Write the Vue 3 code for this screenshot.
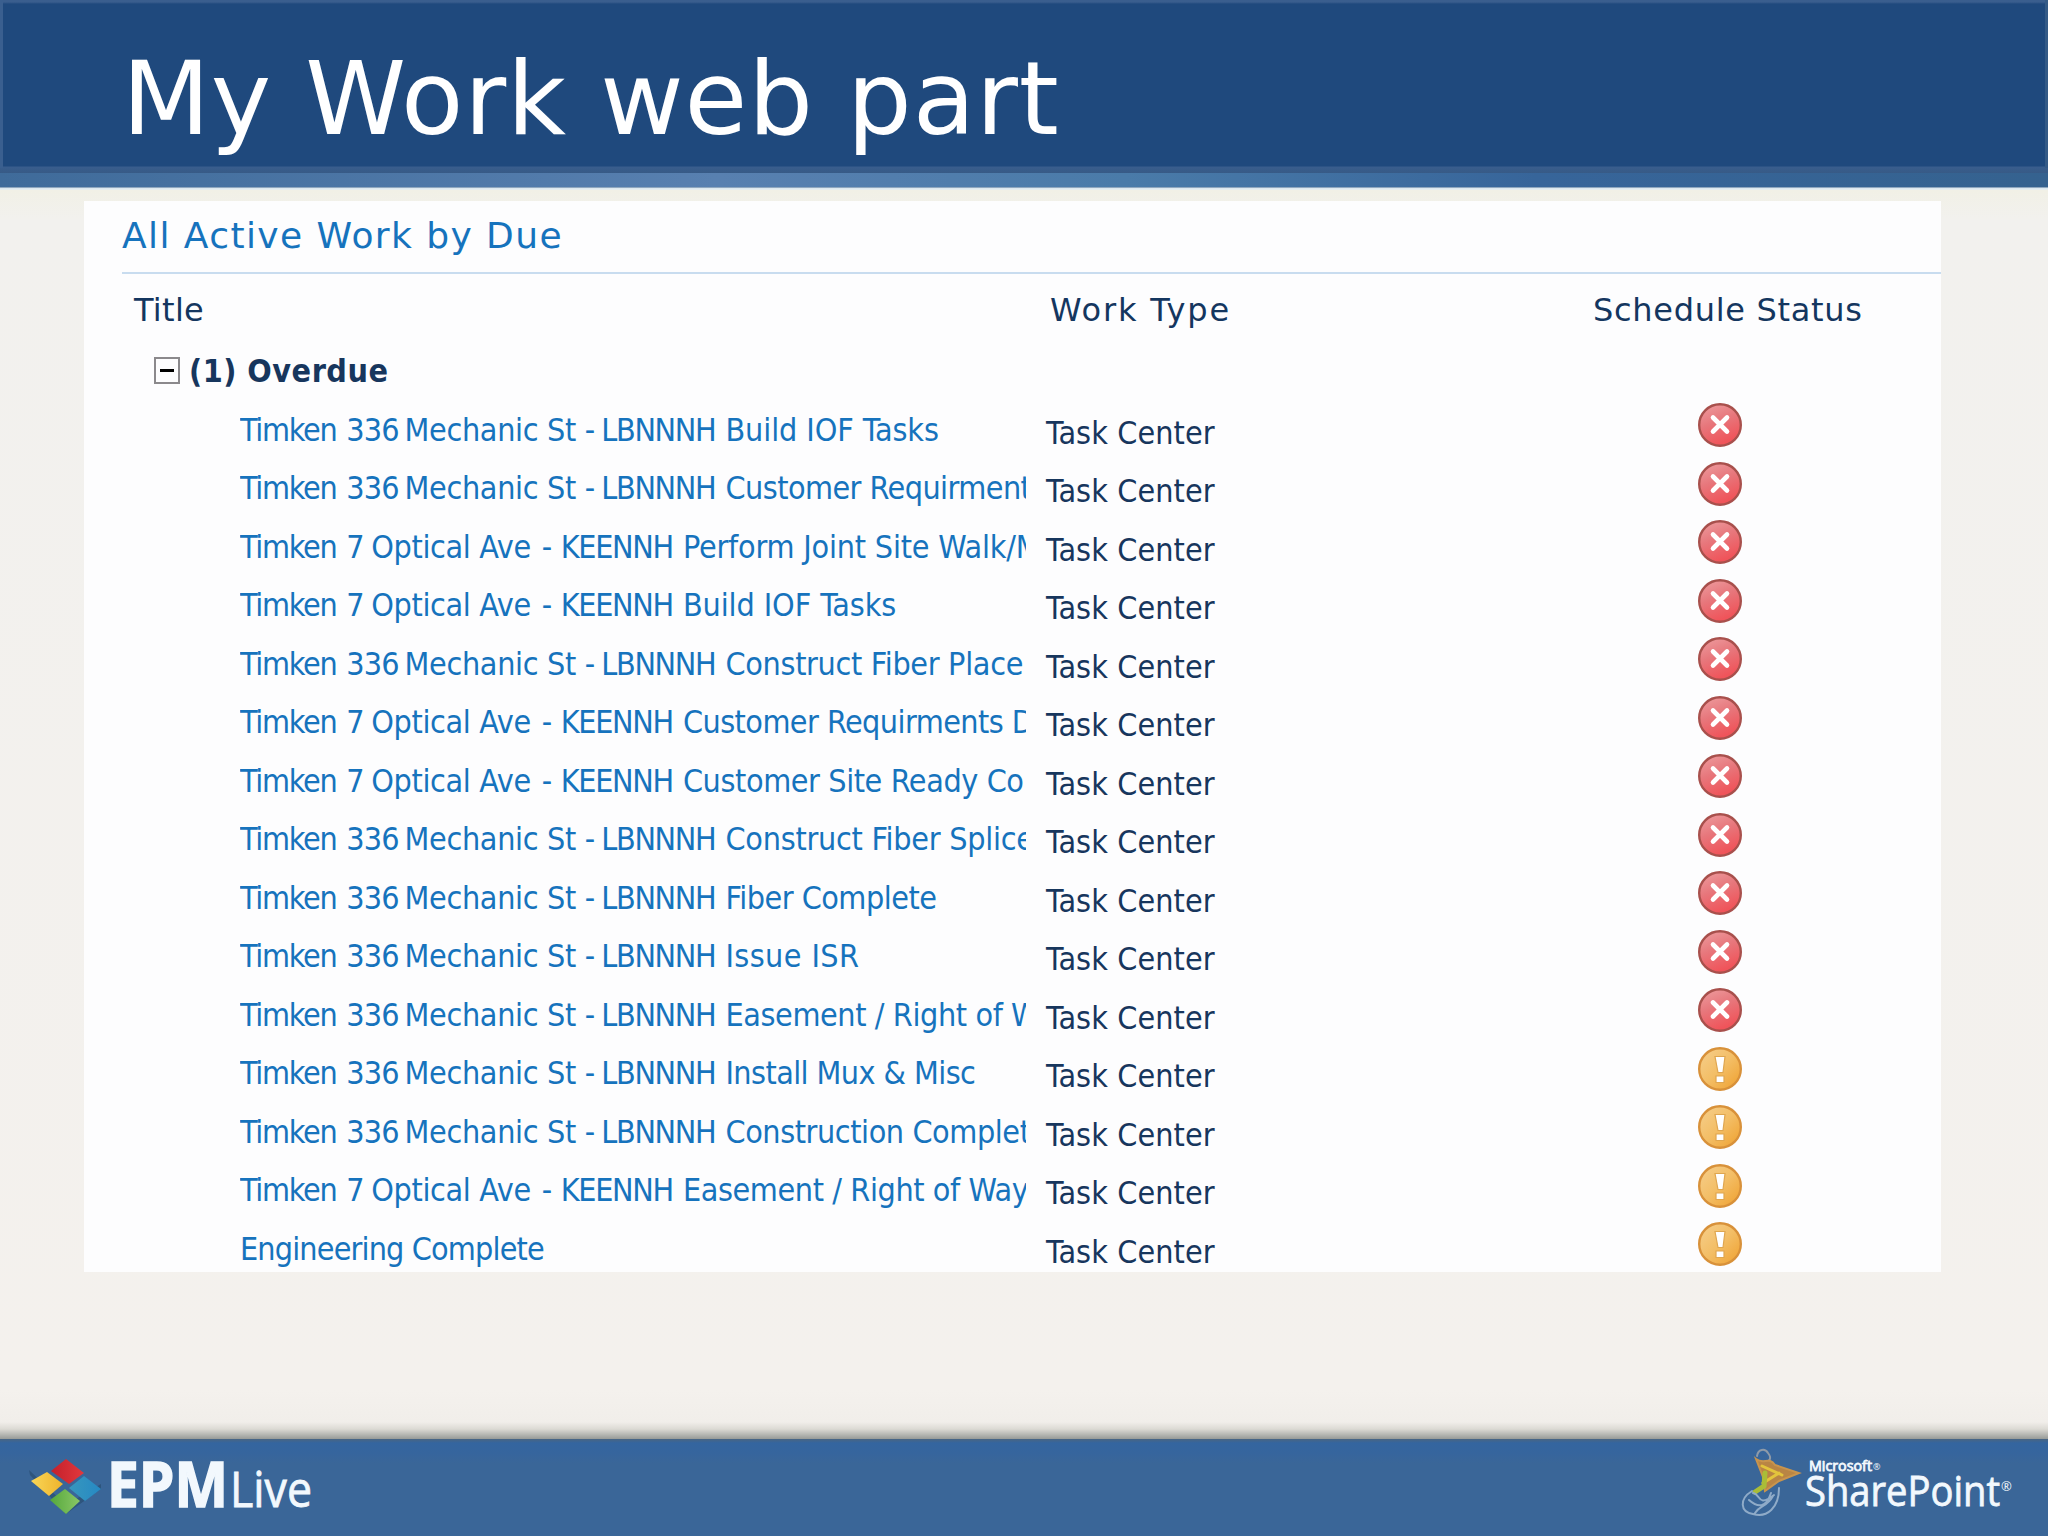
<script setup>
    const columns = [
        { label: 'Title', tracking: 0.3 },
        { label: 'Work Type', tracking: 1.8 },
        { label: 'Schedule Status', tracking: 0.7 }
    ]

    const mechanic = { number: '336', street: 'Mechanic St', code: 'LBNNNH' }
    const optical = { number: '7', street: 'Optical Ave', code: 'KEENNH' }

    const tasks = [
        { site: mechanic, work: 'Build IOF Tasks', tracking: -0.1, late: true },
        { site: mechanic, work: 'Customer Requirments', tracking: -0.55, late: true },
        { site: optical, work: 'Perform Joint Site Walk/M', tracking: -0.2, late: true },
        { site: optical, work: 'Build IOF Tasks', tracking: -0.1, late: true },
        { site: mechanic, work: 'Construct Fiber Place', tracking: -0.32, late: true },
        { site: optical, work: 'Customer Requirments D', tracking: -0.55, late: true },
        { site: optical, work: 'Customer Site Ready Co', tracking: -0.4, late: true },
        { site: mechanic, work: 'Construct Fiber Splice', tracking: -0.25, late: true },
        { site: mechanic, work: 'Fiber Complete', tracking: -0.5, late: true },
        { site: mechanic, work: 'Issue ISR', tracking: 0.4, late: true },
        { site: mechanic, work: 'Easement / Right of W', tracking: -0.4, late: true },
        { site: mechanic, work: 'Install Mux & Misc', tracking: -0.58, late: false },
        { site: mechanic, work: 'Construction Complete', tracking: -0.42, late: false },
        { site: optical, work: 'Easement / Right of Way', tracking: -0.4, late: false },
        { site: null, work: 'Engineering Complete', tracking: -0.84, late: false }
    ]
</script>

<template>
    <div class="slide">
        <header class="header">
            <h1>My Work web part</h1>
        </header>

        <main class="content">
            <section class="panel">
                <h2>All Active Work by Due</h2>
                <div class="grid-row head">
                    <span
                        v-for="col in columns"
                        :key="col.label"
                        :style="{ letterSpacing: col.tracking + 'px' }"
                    >{{ col.label }}</span>
                </div>
                <div class="group">
                    <i class="toggle"></i>
                    <b>(1) Overdue</b>
                </div>
                <div class="grid-row task" v-for="(task, i) in tasks" :key="i">
                    <a class="title" :class="{ optical: task.site === optical }">
                        <template v-if="task.site">
                            <span class="name">Timken</span>
                            <span class="number">{{ task.site.number }}</span>
                            <span class="street">{{ task.site.street }}</span>
                            <span class="dash">-</span>
                            <span class="code">{{ task.site.code }}</span>
                        </template>
                        <span :style="{ letterSpacing: task.tracking + 'px' }">{{ task.work }}</span>
                    </a>
                    <span class="type">Task Center</span>
                    <svg class="status" viewBox="0 0 44 44">
                        <template v-if="task.late">
                            <circle cx="22" cy="22" r="20.8" fill="url(#red)" stroke="#a8504c" stroke-width="2.4" />
                            <path d="M15 14.5L29 28.5M29 14.5L15 28.5" stroke="#fff" stroke-width="4.6" stroke-linecap="round" />
                        </template>
                        <template v-else>
                            <circle cx="22" cy="22" r="20.8" fill="url(#amber)" stroke="#d8913a" stroke-width="2.4" />
                            <path d="M17 9.500h10l-2 16h-5zM18 29h8v6.500h-8z" fill="#fff" stroke="#dfa650" stroke-width="1.2" />
                        </template>
                    </svg>
                </div>
            </section>
        </main>

        <footer class="footer">
            <svg class="epm" width="320" height="97" viewBox="0 0 320 97">
                <path d="M29 31L66 66l35-21v5L66 75 30 36z" fill="#27496b" opacity=".6" />
                <path d="M66 20L84 34 69 45 51 32z" fill="url(#tile-red)" />
                <path d="M47 33L63 45 49 57 31 42z" fill="url(#tile-yellow)" />
                <path d="M84 37L101 50 85 62 69 49z" fill="url(#tile-blue)" />
                <path d="M65 50L80 62 66 75 50 61z" fill="url(#tile-green)" />
                <g class="logo-text">
                    <text class="heavy" x="107" y="68" font-size="62" font-weight="700" textLength="121" lengthAdjust="spacingAndGlyphs">EPM</text>
                    <text class="medium" x="230" y="68" font-size="50" textLength="82" lengthAdjust="spacingAndGlyphs">Live</text>
                </g>
            </svg>
            <svg class="sharepoint" width="308" height="97" viewBox="1740 0 308 97">
                <g fill="none" stroke-linecap="round">
                    <path d="M1757 17c1-7 8-8 11-3 4 5 2 8-3 10" stroke="#8e9aa8" stroke-width="2" />
                    <path d="M1756 20c8 6 13-3 19 6l24 8-20 8-14 10-2-14z" fill="#b98544" stroke="#c9944c" stroke-width="2" />
                    <path d="M1762 27l20 9M1763 44l16-10" stroke="#e3c43c" stroke-width="3" />
                    <path d="M1765 34l-1 13-9 6" stroke="#a9bd38" stroke-width="5" />
                    <path d="M1752 52c-13 8-12 21 1 23 14 4 26-6 26-26M1753 54c8 1 4 15 21 2M1749 61c9 8 17 8 22-7M1755 74c5-8 12-6 18-17" stroke="#8fabc8" stroke-width="2" />
                </g>
                <g class="logo-text">
                    <text class="medium" x="1809" y="32" font-size="14" textLength="63" lengthAdjust="spacingAndGlyphs">Microsoft</text>
                    <text x="1873" y="31" font-size="9">®</text>
                    <text class="medium" x="1805" y="67" font-size="42" textLength="195" lengthAdjust="spacingAndGlyphs">SharePoint</text>
                    <text x="2001" y="52" font-size="13">®</text>
                </g>
            </svg>
        </footer>

        <svg class="defs" width="0" height="0">
            <linearGradient id="red" x1="0" y1="0" x2=".4" y2="1">
                <stop offset="0" stop-color="#ee9fa1" />
                <stop offset=".5" stop-color="#e7777c" />
                <stop offset="1" stop-color="#f0545a" />
            </linearGradient>
            <linearGradient id="amber" x1="0" y1="0" x2="1" y2="1">
                <stop offset="0" stop-color="#f6cf8d" />
                <stop offset=".5" stop-color="#f3be66" />
                <stop offset="1" stop-color="#ef9f2c" />
            </linearGradient>
            <linearGradient id="tile-red">
                <stop offset="0" stop-color="#c4202c" />
                <stop offset="1" stop-color="#e2383c" />
            </linearGradient>
            <linearGradient id="tile-yellow">
                <stop offset="0" stop-color="#f9d657" />
                <stop offset="1" stop-color="#eeb32c" />
            </linearGradient>
            <linearGradient id="tile-blue">
                <stop offset="0" stop-color="#3797bd" />
                <stop offset="1" stop-color="#2689c4" />
            </linearGradient>
            <linearGradient id="tile-green">
                <stop offset="0" stop-color="#55a83c" />
                <stop offset="1" stop-color="#8ac766" />
            </linearGradient>
        </svg>
    </div>
</template>

<style>
    body {
        margin: 0;
    }
</style>

<style scoped>
    .slide {
        display: flex;
        flex-direction: column;
        width: 2048px;
        height: 1536px;
        overflow: hidden;
        background: #f4f1ed;
        font-family: "DejaVu Sans", Verdana, sans-serif;
    }

    .header {
        box-sizing: border-box;
        height: 190px;
        padding: 39px 0 0 122px;
        background:
            linear-gradient(90deg, #3a5f8f 3px, transparent 3px, transparent 2045px, #345a86 2045px) 0 0 / 100% 168px no-repeat,
            linear-gradient(90deg, #3f6b9a, #5880b0 35%, #4a7ba9 55%, #37659a 75%, #35628f) 0 173px / 100% 14px no-repeat,
            linear-gradient(#3a5e8e 2px, #1f497d 4px, #1f497d 166px, #395d8d 167px, #375a86 173px, #47698f 187px, #d8e6ef 188px, #eaf0f0);
    }

    h1 {
        margin: 0;
        color: #fff;
        font-size: 102px;
        font-weight: 400;
        line-height: 120px;
        letter-spacing: 0.85px;
        white-space: nowrap;
    }

    .content {
        flex: 1;
        padding: 11px 0 0 84px;
        background: linear-gradient(#f1f0e6, #f2f1ee 30px, #f4f1ed 1200px, #f1eeea 1232px, #dcdad4 1239px, #979b98 1249px);
    }

    .panel {
        width: 1857px;
        height: 1071px;
        overflow: hidden;
        background: #fdfdfe;
    }

    h2 {
        height: 71px;
        margin: 0 0 0 38px;
        border-bottom: 2px solid #c8dcef;
        color: #1673bd;
        font-size: 36px;
        font-weight: 400;
        line-height: 69px;
        letter-spacing: 1.42px;
    }

    .grid-row {
        display: grid;
        grid-template-columns: 942px 510px 1fr;
    }

    .head {
        height: 67.7px;
        color: #14365f;
        font-size: 32px;
        line-height: 72px;
    }

    .head span:nth-child(1) {
        padding-left: 50px;
    }

    .head span:nth-child(2) {
        padding-left: 24px;
    }

    .head span:nth-child(3) {
        padding-left: 57px;
    }

    .group {
        display: flex;
        align-items: center;
        height: 58.5px;
        padding-left: 70px;
        color: #17365d;
        font-family: "DejaVu Sans Condensed", "DejaVu Sans", sans-serif;
        font-stretch: condensed;
        font-size: 32px;
        letter-spacing: 0.5px;
    }

    .toggle {
        box-sizing: border-box;
        width: 26px;
        height: 27px;
        margin: -1px 9px 0 0;
        border: 2px solid #8b898c;
        background: linear-gradient(#000, #000) center / 14px 3px no-repeat;
    }

    .task {
        height: 58.53px;
        font-family: "DejaVu Sans Condensed", "DejaVu Sans", sans-serif;
        font-stretch: condensed;
        font-size: 32px;
        line-height: 58.53px;
        white-space: nowrap;
    }

    .title {
        display: flex;
        margin-left: 156px;
        padding-top: 0.5px;
        overflow: hidden;
        color: #1673bd;
    }

    .name {
        margin-right: 10px;
        letter-spacing: -1.3px;
    }

    .number {
        margin-right: 6px;
        letter-spacing: -0.9px;
    }

    .optical .number {
        margin-right: 7.5px;
    }

    .street {
        letter-spacing: -0.35px;
    }

    .dash {
        margin: 0 6px 0 9px;
    }

    .optical .dash {
        margin: 0 8.5px 0 11px;
    }

    .code {
        margin-right: 10px;
        letter-spacing: -1.3px;
    }

    .type {
        padding: 3.5px 0 0 20px;
        color: #17365d;
        letter-spacing: 0.1px;
    }

    .status {
        width: 44px;
        height: 44px;
        margin: 3px 0 0 162px;
    }

    .footer {
        display: flex;
        justify-content: space-between;
        height: 97px;
        background: linear-gradient(#496582, #34659f 4px, #36659d 14px, #3a6698 24px);
    }

    .logo-text {
        fill: #f2f8fd;
        font-family: "Open Sans", sans-serif;
    }

    .heavy {
        stroke: #f2f8fd;
        stroke-width: 1.5px;
    }

    .medium {
        stroke: #f2f8fd;
        stroke-width: 0.8px;
    }

    .defs {
        position: absolute;
    }
</style>
